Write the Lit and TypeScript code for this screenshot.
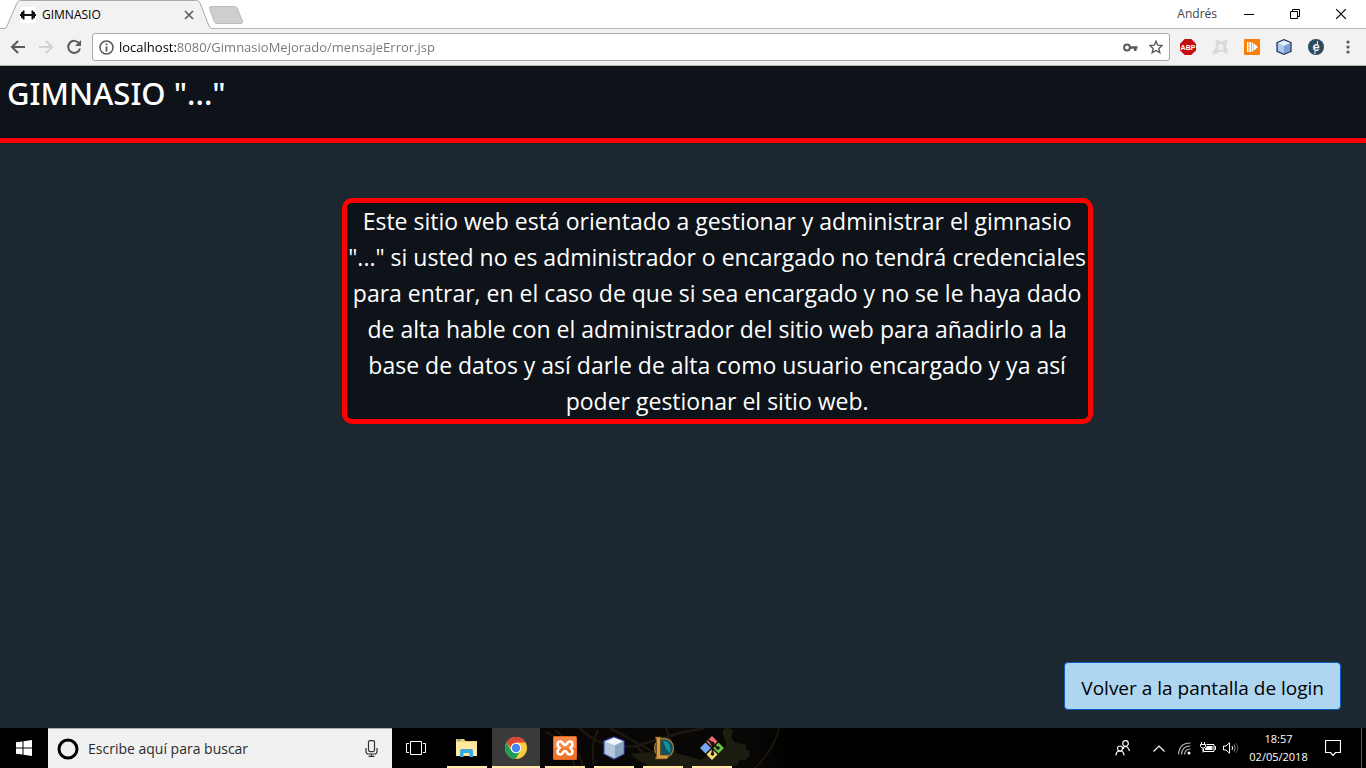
import { LitElement, html, svg, css } from "lit";
import { customElement } from "lit/decorators.js";

const FONT = css`"Open Sans", "Noto Sans", sans-serif`;

@customElement("browser-chrome")
class BrowserChrome extends LitElement {
  static styles = css`
    :host { display: block; font-family: ${FONT}; color: #000; }
    * { box-sizing: border-box; }
    svg { display: block; }
    button { border: 0; padding: 0; margin: 0; background: none; font: inherit; color: inherit; display: grid; place-items: center; }
    .strip { display: flex; height: 29px; background: #fff; border-bottom: 1px solid #b4b4b4; padding-right: 2px; }
    .tab { position: relative; width: 209px; height: 29px; display: flex; align-items: center; padding: 0 15px 0 20px; gap: 6px; }
    .shape { position: absolute; left: 0; top: 0; }
    .tab > :not(.shape) { position: relative; }
    .title { flex: 1; font-size: 12px; line-height: 16px; }
    .plus { width: 36px; height: 30px; }
    .grow { flex: 1; }
    .user { align-self: center; font-size: 12px; line-height: 16px; color: #444; padding-right: 9px; }
    .win { width: 46px; height: 27px; }
    .bar { display: flex; align-items: center; height: 37px; background: #f2f2f2; border-bottom: 1px solid #b0b0b0; padding: 0 2px 0 4px; }
    .nav { width: 28px; height: 28px; }
    .omni { flex: 1; display: flex; align-items: center; height: 28px; margin: 0 2px 0 4px; padding: 0 1px 0 6px; background: #fff; border: 1px solid #a8a8a8; border-radius: 3px; }
    .url { flex: 1; min-width: 0; border: 0; outline: 0; padding: 0; margin-left: 5px; font: 13px/20px ${FONT}; color: transparent; background: linear-gradient(90deg, #000 57px, #757575 57px); background-clip: text; -webkit-background-clip: text; }
    .omni button { width: 25px; height: 24px; }
    .exts { display: flex; }
    .exts button { width: 32px; height: 28px; }
    .exts svg { overflow: visible; }
    .mark { font-family: "Liberation Sans", sans-serif; font-weight: 700; text-anchor: middle; }
    .abp { font-size: 7px; fill: #fff; }
    .avast { font-size: 10px; fill: #f5f5f5; }
    .e { font-size: 13px; fill: #f2f2f2; }
  `;

  render() {
    return html`
      <div class="strip">
        <div class="tab">
          <svg class="shape" width="212" height="29" viewBox="0 0 212 29">
            <path d="M0 28.500H4.500Q6 28.500 7 26L17 3Q18 .500 20.500 .500H196.500Q199 .500 200 3L209 26Q210 28.500 212 28.500V29H0Z" fill="#f2f2f2"/>
            <path d="M0 28.500H4.500Q6 28.500 7 26L17 3Q18 .500 20.500 .500H196.500Q199 .500 200 3L209 26Q210 28.500 212 28.500" fill="none" stroke="#a9a9a9"/>
          </svg>
          <svg width="16" height="16" viewBox="0 0 16 16"><path fill="#fff" d="M0 0h16v16H0z"/><path fill="#111" d="M0 7h1V5h1.500V3.500h2V7h7V3.500h2V5H15v2h1v2h-1v2h-1.500v1.500h-2V9h-7v3.500h-2V11H1V9H0z"/></svg>
          <span class="title">GIMNASIO</span>
          <button aria-label="Cerrar pestaña"><svg width="10" height="10" viewBox="0 0 10 10"><path d="M1 1l8 8M9 1L1 9" stroke="#5a5a5a" stroke-width="1.600"/></svg></button>
        </div>
        <button class="plus" aria-label="Nueva pestaña"><svg width="36" height="20" viewBox="0 0 36 20"><path d="M2 1.500H25.500q2 0 2.600 1.500l5.400 13q.8 2.500-1.500 2.500H8q-2 0-2.700-1.800L.600 3.500Q0 1.500 2 1.500z" fill="#cecece" stroke="#bcbcbc"/></svg></button>
        <span class="grow"></span>
        <span class="user">Andrés</span>
        <button class="win" aria-label="Minimizar"><svg width="10" height="10"><path d="M0 5.500h10" stroke="#000"/></svg></button>
        <button class="win" aria-label="Restaurar"><svg width="10" height="10" viewBox="0 0 10 10" fill="none" stroke="#000"><path d="M.5 2.500h7v7h-7zM2.500 2.500v-2h7v7h-2"/></svg></button>
        <button class="win" aria-label="Cerrar"><svg width="10" height="10" viewBox="0 0 10 10"><path d="M0 0l10 10M10 0L0 10" stroke="#000" stroke-width="1.200"/></svg></button>
      </div>
      <div class="bar">
        <button class="nav" aria-label="Atrás"><svg width="16" height="14" viewBox="0 0 16 14" fill="none" stroke="#5a5a5a" stroke-width="2"><path d="M15 7H2.500M8 1L2 7l6 6"/></svg></button>
        <button class="nav" aria-label="Adelante"><svg width="16" height="14" viewBox="0 0 16 14" fill="none" stroke="#d2d2d2" stroke-width="2"><path d="M1 7h12.500M8 1l6 6-6 6"/></svg></button>
        <button class="nav" aria-label="Recargar"><svg width="16" height="16" viewBox="0 0 16 16"><path d="M13.200 4.500A6 6 0 1 0 14 9.500" fill="none" stroke="#5a5a5a" stroke-width="2"/><path d="M15 1v6H9z" fill="#5a5a5a"/></svg></button>
        <div class="omni">
          <svg width="15" height="15" viewBox="0 0 15 15"><circle cx="7.500" cy="7.500" r="6.500" fill="none" stroke="#5a5a5a" stroke-width="1.500"/><path d="M7.500 3.500v1.700M7.500 6.500v5" stroke="#5a5a5a" stroke-width="1.800"/></svg>
          <input class="url" aria-label="Dirección" value="localhost:8080/GimnasioMejorado/mensajeError.jsp">
          <button aria-label="Contraseña guardada"><svg width="15" height="9" viewBox="0 0 15 9"><circle cx="4" cy="4.500" r="2.900" fill="none" stroke="#5a5a5a" stroke-width="2"/><path d="M7 3.300h7.500v2.400H13.500v2.300H11V5.700H7z" fill="#5a5a5a"/></svg></button>
          <button aria-label="Favorito"><svg width="14" height="14" viewBox="0 0 14 14"><path d="M7 1.200l1.700 4 4.400.4-3.300 2.900 1 4.200L7 10.500l-3.800 2.200 1-4.200L.9 5.600l4.400-.4z" fill="none" stroke="#5a5a5a" stroke-width="1.400"/></svg></button>
        </div>
        <div class="exts">
          <button aria-label="Adblock Plus"><svg width="16" height="16" viewBox="0 0 16 16"><path d="M4.700 0h6.600L16 4.700v6.600L11.300 16H4.700L0 11.300V4.700z" fill="#c70d0d"/><text class="mark abp" x="8" y="10.500">ABP</text></svg></button>
          <button aria-label="Avast"><svg width="16" height="16" viewBox="0 0 16 16"><path d="M4 1.500Q4.500.500 6 1L10 2.500 13.500 1Q16 .800 15.500 3L14 7l1.800 5q.2 3-2.300 2.500L11 12.500 7 13.500l-4 1.700Q0 15.500.500 13L3.500 9z" fill="#d9d9d9"/><text class="mark avast" x="8.500" y="10.500">a</text></svg></button>
          <button aria-label="Reproductor"><svg width="16" height="16" viewBox="0 0 16 16"><rect width="16" height="16" rx="1" fill="#f8800a"/><path d="M3 3h1.500v10H3zM5.300 3h2v10h-2zM8 3.500l1.500.800v7.400L8 12.500zM10 4.500L14 8l-4 3.500z" fill="#fff"/></svg></button>
          <button aria-label="NetBeans"><svg width="16" height="16" viewBox="0 0 16 16"><path d="M8 .7l7 3v8.600l-7 3-7-3V3.700z" fill="#a9c9ee" stroke="#233462" stroke-width="1.300"/><path d="M8 1.500l6 2.600L8 6.800 2 4.100z" fill="#e2eef9"/><path d="M8 7v7.500l6-2.600V4.500z" fill="#7ba0d2"/></svg></button>
          <button aria-label="Extensión e"><svg width="16" height="16" viewBox="0 0 16 16"><circle cx="8" cy="8" r="8" fill="#2c4a5e"/><text class="mark e" x="8" y="12">e</text><path d="M9.500 2v3M7 12v3" stroke="#f2f2f2"/></svg></button>
          <button aria-label="Menú"><svg width="4" height="14" viewBox="0 0 4 14" fill="#5a5a5a"><circle cx="2" cy="2" r="1.600"/><circle cx="2" cy="7" r="1.600"/><circle cx="2" cy="12" r="1.600"/></svg></button>
        </div>
      </div>
    `;
  }
}

@customElement("gym-page")
class GymPage extends LitElement {
  static styles = css`
    :host { display: flex; flex-direction: column; font-family: ${FONT}; background: #1d272f; color: #fff; }
    * { box-sizing: border-box; }
    header { background: #0e1319; border-bottom: 5px solid #f00; height: 77px; padding: 3px 7px; }
    h1 { margin: 0; font: 500 31px/48px "Noto Sans", sans-serif; }
    .msg { width: 55%; margin: 55px 0 0 25%; text-align: center; font-size: 23px; line-height: 36px; background: #0e1319; border: 5px solid #f00; border-radius: 10px; }
    footer { margin-top: auto; display: flex; justify-content: flex-end; padding: 0 25px 18px; }
    button { height: 48px; padding: 3px 16px 0; font: 19px/30px ${FONT}; color: #000; background: #aed6f1; border: 1px solid #0a5cc0; border-radius: 4px; }
  `;
  render() {
    return html`
      <header><h1>GIMNASIO "..."</h1></header>
      <div class="msg">Este sitio web está orientado a gestionar y administrar el gimnasio "..." si usted no es administrador o encargado no tendrá credenciales para entrar, en el caso de que si sea encargado y no se le haya dado de alta hable con el administrador del sitio web para añadirlo a la base de datos y así darle de alta como usuario encargado y ya así poder gestionar el sitio web.</div>
      <footer><button>Volver a la pantalla de login</button></footer>
    `;
  }
}

const apps = [
  { name: "Explorador de archivos", icon: svg`<path d="M1 3h8l1.500 2H22v15H1z" fill="#f3cf69"/><path d="M1 6h21v14H1z" fill="#ffe9a0"/><path d="M2.500 4h3" stroke="#2f9fd8" stroke-width="1.500"/><path d="M5 21v-6q0-2 2-2h9q2 0 2 2v6h-3.500v-4h-6v4z" fill="#36a9e0"/>` },
  { name: "Google Chrome", active: true, icon: svg`<circle cx="12" cy="12" r="11" fill="#fbcd3c"/><path d="M2.500 6.500A11 11 0 0 1 21.500 6.500H12L7 12z" fill="#dc4437"/><path d="M2.500 6.500A11 11 0 0 0 11.500 23L16.500 14.500 12 17 7.200 14.600z" fill="#1a9c58"/><circle cx="12" cy="12" r="5.300" fill="#fff"/><circle cx="12" cy="12" r="4.200" fill="#4486f4"/>` },
  { name: "XAMPP", icon: svg`<rect width="24" height="24" rx="1.500" fill="#e2661f"/><rect x="1" y="1" width="22" height="12" fill="#f58a4a"/><rect x="1" y="12" width="22" height="11" fill="#f0732a"/><path d="M7.500 5.500C10.500 5.500 9.500 9 12 9S13.500 5.500 16.500 5.500C20 5.500 20.500 9.500 17.500 12 20.500 14.500 20 18.500 16.500 18.500 13.500 18.500 14.500 15 12 15S10.500 18.500 7.500 18.500C4 18.500 3.500 14.500 6.500 12 3.500 9.500 4 5.500 7.500 5.500z" fill="none" stroke="#fff" stroke-width="2.600"/>` },
  { name: "NetBeans", icon: svg`<path d="M12 1l10 4v13l-10 5-10-5V5z" fill="#b4c8dd" stroke="#3844a8" stroke-width="1.200"/><path d="M12 1.800l9 3.500-8.500 4L3 5.500z" fill="#edf5fa"/><path d="M13 9.500l8.300-4V17.500L13 22z" fill="#8aa5c4"/>` },
  { name: "League of Legends", icon: svg`<circle cx="13" cy="12" r="9.500" fill="#0b5362" stroke="#a37b3c" stroke-width="1.300"/><path d="M12 5q9 0 7 12l-4-4z" fill="#168f9c"/><path d="M4 1h6.500l-1 2v16h9.500l-3 4H4l1.500-3V4z" fill="#d49b43" stroke="#654116" stroke-width=".8"/>` },
  { name: "Git", icon: svg`<path d="M12 0l5.500 5.500-5.500 5.500-5.500-5.500z" fill="#ef6f6f"/><path d="M18.500 6.500L24 12l-5.500 5.500L13 12z" fill="#6bc343"/><path d="M5.500 6.500L11 12l-5.500 5.500L0 12z" fill="#76a7ee"/><path d="M12 13l5.500 5.500L12 24l-5.500-5.500z" fill="#f8dc73"/><path d="M8.500 4l4 3.500v11M12.500 8l5 4" stroke="#151515" stroke-width="1.800" fill="none"/><g fill="#151515"><circle cx="12.500" cy="7.500" r="2"/><circle cx="18" cy="12" r="1.800"/><circle cx="12.500" cy="18" r="1.800"/></g>` },
];

@customElement("task-bar")
class TaskBar extends LitElement {
  static styles = css`
    :host { display: block; font-family: ${FONT}; color: #fff; }
    * { box-sizing: border-box; }
    svg { display: block; }
    button { border: 0; padding: 0; margin: 0; background: none; font: inherit; color: inherit; display: grid; place-items: center; height: 40px; }
    .bar { position: relative; display: flex; height: 40px; background: #000; }
    .wall { position: absolute; left: 540px; top: 0; }
    .bar > :not(.wall) { position: relative; }
    .start { width: 48px; }
    .search { width: 344px; display: flex; align-items: center; padding: 0 14px 0 9px; gap: 9px; background: #f1f1f1; border-top: 1px solid #a8acaf; }
    .search input { flex: 1; min-width: 0; border: 0; outline: 0; padding: 0; background: none; font: 14px/20px ${FONT}; color: #2b2b2b; }
    .search input::placeholder { color: #2b2b2b; opacity: 1; }
    .view { width: 51px; padding-right: 3px; }
    .apps { display: flex; gap: 1px; flex: 1; }
    .app { width: 48px; position: relative; }
    .app::after { content: ""; position: absolute; left: 4px; right: 4px; bottom: 0; height: 2px; background: #ffe9ad; }
    .active { background: #3a3a3a; }
    .active::after { left: 0; right: 0; }
    .tray { display: flex; align-items: center; }
    .t { width: 23px; }
    .people { width: 44px; }
    .chev { width: 28px; }
    .clock { width: 73px; font-size: 11px; line-height: 18px; text-align: center; }
    .note { width: 36px; }
    .desk { width: 5px; height: 40px; margin-left: 10px; border-left: 1px solid #5c5c5c; }
  `;
  render() {
    return html`
      <div class="bar">
        <svg class="wall" width="260" height="40" viewBox="0 0 260 40" fill="none">
          <defs><linearGradient id="fade"><stop offset="0" stop-color="#090705"/><stop offset=".8" stop-color="#090705"/><stop offset="1" stop-color="#000"/></linearGradient></defs>
          <rect width="260" height="40" fill="url(#fade)"/>
          <path d="M40 0Q60 22 96 18L140 5 165 0M70 0L115 25 150 40M96 18L118 40M126 0L140 40" stroke="#1c1811" stroke-width="2.500"/>
          <path d="M5 4q25 10 30 36M15 2q25 18 28 38M58 2q-8 16-4 34" stroke="#1e1712" stroke-width="2"/>
          <path d="M90 26Q130 20 160 32L178 22Q190 22 184 10 180 0 188 0 196 2 192 6 190 12 197 15L206 17 206 22 209 22 210 27 206 32 200 32 197 37 185 40H110z" fill="#1d1c11"/>
          <path d="M239 0Q235 20 215 40" stroke="#1f190e" stroke-width="1.500"/>
        </svg>
        <button class="start" aria-label="Inicio"><svg width="16" height="16" viewBox="0 0 16 16" fill="#fff"><path d="M0 2.300L6.500 1.400V7.500H0zM7.500 1.200L16 0V7.500H7.500zM0 8.500H6.500V14.600L0 13.700zM7.500 8.500H16V16L7.500 14.800z"/></svg></button>
        <label class="search">
          <svg width="22" height="22" viewBox="0 0 22 22"><circle cx="11" cy="11" r="9" fill="none" stroke="#000" stroke-width="3"/></svg>
          <input type="text" aria-label="Buscar" placeholder="Escribe aquí para buscar">
          <svg width="13" height="17" viewBox="0 0 13 17" fill="none" stroke="#333" stroke-width="1.200"><rect x="3.500" y=".6" width="6" height="11" rx="1.500"/><path d="M1 8v3.500q0 2.500 2.500 2.500h6q2.500 0 2.500-2.500V8M6.500 14v2.300M3.500 16.300h6"/></svg>
        </label>
        <button class="view" aria-label="Vista de tareas"><svg width="20" height="14" viewBox="0 0 20 14" fill="none" stroke="#fff"><path d="M4.500 .500h11v13h-11zM3 2.500H.500v9H3M17 2.500h2.500v9H17"/></svg></button>
        <div class="apps">
          ${apps.map((a) => html`<button class="app ${a.active ? "active" : ""}" aria-label=${a.name}><svg width="24" height="24" viewBox="0 0 24 24">${a.icon}</svg></button>`)}
        </div>
        <div class="tray">
          <button class="people" aria-label="Contactos"><svg width="16" height="16" viewBox="0 0 16 16" fill="none" stroke="#fff" stroke-width="1.200"><circle cx="10.500" cy="3.500" r="2.800"/><circle cx="5" cy="8.500" r="2.500"/><path d="M8.500 9Q8 6.500 10.500 6.500T14.500 11M1 15.500Q1 11 5 11t4 4.500"/></svg></button>
          <button class="chev" aria-label="Iconos ocultos"><svg width="12" height="7" viewBox="0 0 12 7"><path d="M.5 6.500L6 1l5.500 5.500" fill="none" stroke="#fff" stroke-width="1.200"/></svg></button>
          <button class="t" aria-label="Red"><svg width="13" height="13" viewBox="0 0 13 13" fill="none" stroke="#bbb" stroke-width="1.200"><path d="M.6 12.500Q1 1 12.500 1M3.500 12.500Q4 4 12.500 4M6.500 12.500Q7 7 12.500 7"/><circle cx="11" cy="11" r="1.500" fill="#fff" stroke="none"/></svg></button>
          <button class="t" aria-label="Batería"><svg width="16" height="12" viewBox="0 0 16 12"><path d="M6.500 2.500h7.500v7H3.500V7M14.500 4.500h1v3h-1M1.500 0v2M4.500 0v2M.5 2.500h5v2l-1.500 1.500H2L.5 4.500zM3 6v4.500" fill="none" stroke="#fff"/><path d="M7 4H12.500V8H5V6.500z" fill="#fff"/></svg></button>
          <button class="t" aria-label="Volumen"><svg width="16" height="12" viewBox="0 0 16 12" fill="none" stroke="#fff"><path d="M.5 4h2.500L6.500 .800v10.400L3 8H.5z"/><path d="M9 4q1.200 2 0 4"/><path d="M11 2.500q2.500 3.500 0 7" stroke="#999"/><path d="M13 1q3.500 5 0 10" stroke="#555"/></svg></button>
          <div class="clock">18:57<br>02/05/2018</div>
          <button class="note" aria-label="Notificaciones"><svg width="16" height="16" viewBox="0 0 16 16"><path d="M.5 .500h15v12h-5L8 15.500 5.500 12.500h-5z" fill="none" stroke="#fff" stroke-width="1.200"/></svg></button>
          <span class="desk"></span>
        </div>
      </div>
    `;
  }
}

@customElement("app-root")
class AppRoot extends LitElement {
  static styles = css`
    :host { display: flex; flex-direction: column; min-height: 100vh; }
    gym-page { flex: 1; }
  `;
  render() {
    return html`<browser-chrome></browser-chrome><gym-page></gym-page><task-bar></task-bar>`;
  }
}
